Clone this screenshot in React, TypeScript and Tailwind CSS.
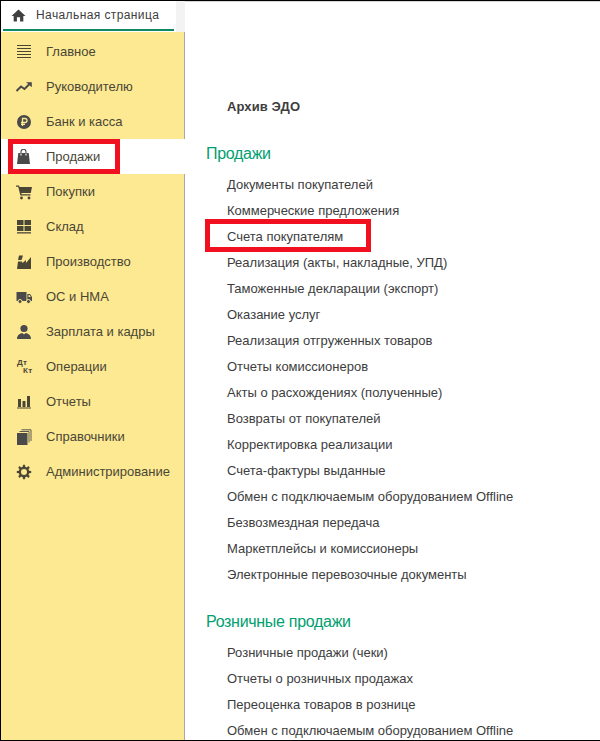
const font = "[font-family:'Liberation_Sans',Arial,sans-serif]";

function Home() {
  return (
    <svg width="15" height="13" viewBox="0 0 16 14" className="text-[#404040]" fill="currentColor">
      <path d="M8 0.5 L0.5 7.5 L2.8 7.5 L2.8 13.5 L6.3 13.5 L6.3 9 L9.7 9 L9.7 13.5 L13.2 13.5 L13.2 7.5 L15.5 7.5 Z" />
    </svg>
  );
}

const sectionIcons: Record<string, React.ReactNode> = {
  menu: (
    <g fill="#4a4636">
      <rect x="1" y="1" width="14" height="1" />
      <rect x="1" y="4" width="14" height="1" />
      <rect x="1" y="7" width="14" height="1" />
      <rect x="1" y="10" width="14" height="1" />
      <rect x="1" y="13" width="14" height="1" />
    </g>
  ),
  chart: (
    <g fill="none" stroke="#4a4a4a" strokeWidth="2">
      <path d="M0.5 12 L5 7.5 L8.5 10 L14 4.5" />
      <path d="M10.5 3.5 H15.5 V8" fill="#4a4a4a" strokeWidth="0.6" />
    </g>
  ),
  ruble: (
    <g>
      <circle cx="8" cy="8" r="7" fill="#4a4a4a" />
      <path d="M6.5 12 V4.5 H9 A2 2 0 0 1 9 8.5 H5 M5 10.3 H9" fill="none" stroke="#fde992" strokeWidth="1.3" />
    </g>
  ),
  bag: (
    <g>
      <path d="M2.3 4 H12.7 L14 15 H1 Z" fill="#4a4a4a" />
      <path d="M5 6.5 V2.8 A2.5 2.5 0 0 1 10 2.8 V6.5" fill="none" stroke="#4a4a4a" strokeWidth="1.1" />
      <path d="M5 4.5 V6.5 M10 4.5 V6.5" stroke="#ffffff" strokeWidth="1.1" />
    </g>
  ),
  cart: (
    <g fill="#4a4636">
      <path d="M0 1.5 H3 L3.6 3 H16 L14.8 9 H5.3 L5.6 10.3 H14.5 V11.5 H4.4 L2.2 2.8 H0 Z" />
      <circle cx="5.5" cy="14" r="1.4" />
      <circle cx="13" cy="14" r="1.4" />
    </g>
  ),
  boxes: (
    <g fill="#4a4636">
      <rect x="1" y="1" width="6.5" height="5" />
      <rect x="8.5" y="1" width="6.5" height="5" />
      <rect x="1" y="7" width="6.5" height="5" />
      <rect x="8.5" y="7" width="6.5" height="5" />
      <rect x="1" y="13.2" width="14" height="1.3" />
    </g>
  ),
  factory: (
    <g fill="#4a4636">
      <path d="M3 1.5 H7 L5.5 6 H2 Z" />
      <path d="M1 15 L2 7.5 H6 L6.5 9 L10 6 V9 L15 3 V15 Z" />
    </g>
  ),
  truck: (
    <g fill="#4a4a4a">
      <rect x="0.5" y="3" width="10" height="9" />
      <path d="M11.3 5 H14 L16 8 V12 H11.3 Z" />
      <path d="M12.5 6 H13.6 L14.8 8 H12.5 Z" fill="#fde992" />
      <circle cx="4" cy="12.5" r="2" stroke="#fde992" />
      <circle cx="12.5" cy="12.5" r="2" stroke="#fde992" />
    </g>
  ),
  person: (
    <g fill="#4a4a4a">
      <circle cx="8" cy="4.5" r="3.6" />
      <path d="M1 15 C1 10.5 4.5 9.5 6.3 9 L8 10.5 L9.7 9 C11.5 9.5 15 10.5 15 15 Z" />
    </g>
  ),
  reports: (
    <g fill="#4a4636">
      <rect x="2" y="5" width="3" height="8" />
      <rect x="6.5" y="7" width="3" height="6" />
      <rect x="11" y="2" width="3" height="11" />
      <rect x="1" y="13.5" width="14" height="1" />
    </g>
  ),
  books: (
    <g>
      <rect x="1" y="4" width="10.5" height="12" fill="#4a4a4a" />
      <path d="M3.5 2.5 H13 V13.5 M5.5 0.8 H15 V12" fill="none" stroke="#4a4a4a" strokeWidth="0.9" />
    </g>
  ),
  gear: (
    <g>
      <circle cx="8" cy="8" r="4.2" fill="none" stroke="#4a4636" strokeWidth="2.4" />
      <g stroke="#4a4636" strokeWidth="2.2">
        <path d="M8 0.8 V3" />
        <path d="M8 13 V15.2" />
        <path d="M0.8 8 H3" />
        <path d="M13 8 H15.2" />
        <path d="M2.9 2.9 L4.5 4.5" />
        <path d="M11.5 11.5 L13.1 13.1" />
        <path d="M2.9 13.1 L4.5 11.5" />
        <path d="M11.5 4.5 L13.1 2.9" />
      </g>
    </g>
  ),
};

const sections = [
  { label: "Главное", icon: "menu" },
  { label: "Руководителю", icon: "chart" },
  { label: "Банк и касса", icon: "ruble" },
  { label: "Продажи", icon: "bag", active: true },
  { label: "Покупки", icon: "cart" },
  { label: "Склад", icon: "boxes" },
  { label: "Производство", icon: "factory" },
  { label: "ОС и НМА", icon: "truck" },
  { label: "Зарплата и кадры", icon: "person" },
  { label: "Операции", icon: "dtkt" },
  { label: "Отчеты", icon: "reports" },
  { label: "Справочники", icon: "books" },
  { label: "Администрирование", icon: "gear" },
];

const sales = [
  "Документы покупателей",
  "Коммерческие предложения",
  "Счета покупателям",
  "Реализация (акты, накладные, УПД)",
  "Таможенные декларации (экспорт)",
  "Оказание услуг",
  "Реализация отгруженных товаров",
  "Отчеты комиссионеров",
  "Акты о расхождениях (полученные)",
  "Возвраты от покупателей",
  "Корректировка реализации",
  "Счета-фактуры выданные",
  "Обмен с подключаемым оборудованием Offline",
  "Безвозмездная передача",
  "Маркетплейсы и комиссионеры",
  "Электронные перевозочные документы",
];

const retail = [
  "Розничные продажи (чеки)",
  "Отчеты о розничных продажах",
  "Переоценка товаров в рознице",
  "Обмен с подключаемым оборудованием Offline",
];

function SectionIcon({ name }: { name: string }) {
  if (name === "dtkt") {
    return (
      <div className="flex h-4 w-4 flex-col text-[8px] font-bold leading-[8px] tracking-[0.4px] text-[#4a4636]">
        <span className="pl-[1px]">Дт</span>
        <span className="pl-[7px]">Кт</span>
      </div>
    );
  }
  return (
    <svg width="16" height="16" viewBox="0 0 16 16">
      {sectionIcons[name]}
    </svg>
  );
}

function LinkList({ items }: { items: string[] }) {
  return (
    <ul>
      {items.map((item) => (
        <li key={item} className="flex h-[26px] items-center pl-[41px] text-[13px] text-[#3d3d3d]">
          {item}
        </li>
      ))}
    </ul>
  );
}

export default function App() {
  return (
    <div className={`${font} relative flex h-[741px] w-[600px] overflow-hidden border-y border-l border-black bg-white`}>
      <div className="flex w-[184px] shrink-0 flex-col">
        <div className="flex h-[31px] bg-[#f3f3f3]">
          <div className="flex h-[31px] w-[175px] flex-col bg-white">
            <div className="flex flex-1 items-center gap-[10px] pl-[10px] text-[12px] tracking-[0.4px] text-[#3d3d3d]">
              <Home />
              Начальная страница
            </div>
            <div className="mx-[2px] mb-[1px] h-[2px] bg-[#0f8a5f]" />
          </div>
        </div>
        <nav className="flex-1 border-r border-[#a8a8a8] bg-[#fde992] pt-[2px]">
          {sections.map((s) => (
            <div
              key={s.label}
              className={`flex h-[35px] items-center gap-[14px] pl-[15px] text-[13px] text-[#4a4636] ${s.active ? "mr-[-1px] bg-white" : ""}`}
            >
              <SectionIcon name={s.icon} />
              {s.label}
            </div>
          ))}
        </nav>
      </div>

      <main className="flex flex-1 flex-col">
        <div className="h-[4px] bg-[#f3f3f3]" />
        <div className="flex-1 border-t border-[#d4d4d4] pl-[1px] pt-[95px]">
          <div className="pl-[41px] text-[13px] font-bold leading-[20px] tracking-[0.1px] text-[#3d3d3d]">Архив ЭДО</div>
          <h2 className="mt-[25px] pl-[20px] text-[16px] leading-[24px] tracking-[-0.3px] text-[#00a070]">Продажи</h2>
          <div className="mt-[6px]">
            <LinkList items={sales} />
          </div>
          <h2 className="mt-[22px] pl-[20px] text-[16px] leading-[24px] tracking-[-0.3px] text-[#00a070]">Розничные продажи</h2>
          <div className="mt-[6px]">
            <LinkList items={retail} />
          </div>
        </div>
      </main>

      <div className="absolute left-[7px] top-[138px] h-[35px] w-[112px] border-[5px] border-[#f0101f]" />
      <div className="absolute left-[204px] top-[218px] h-[33px] w-[166px] border-[5px] border-[#f0101f]" />
    </div>
  );
}
